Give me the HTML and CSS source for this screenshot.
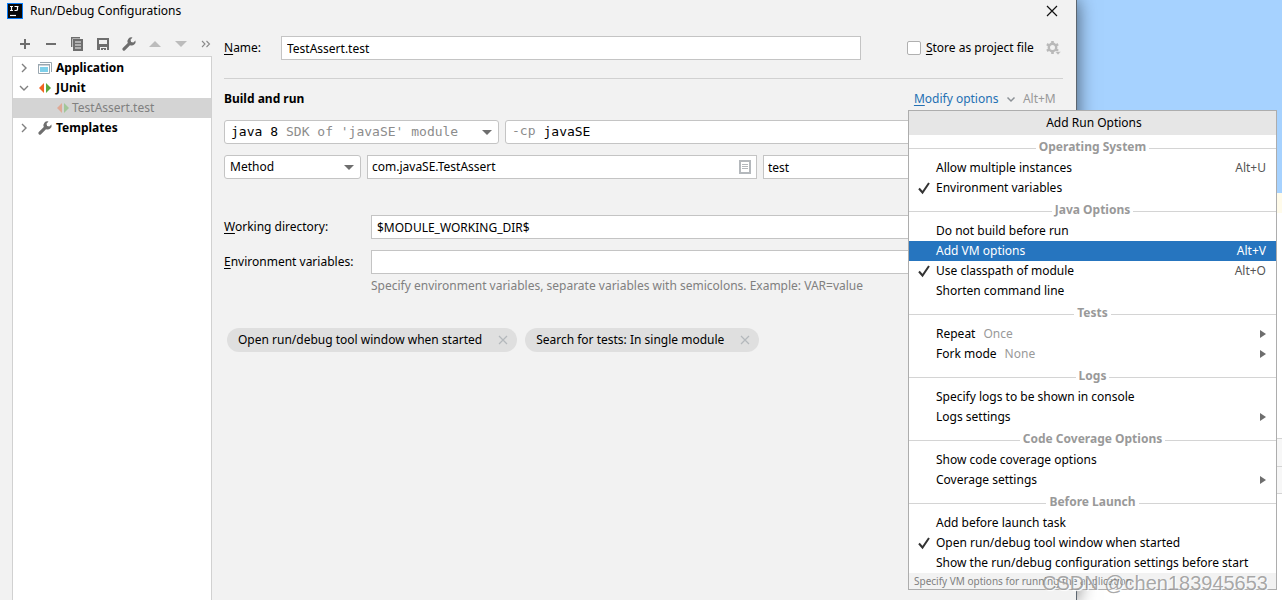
FILE: index.html
```html
<!DOCTYPE html>
<html lang="en">
<head>
<meta charset="utf-8">
<title>Run/Debug Configurations</title>
<link rel="stylesheet" href="styles.css">
</head>
<body>
<div class="desktop">
  <section class="dialog" aria-label="Run/Debug Configurations">
    <header class="titlebar">
      <svg class="logo" width="16" height="16" viewBox="0 0 16 16" aria-hidden="true"><rect width="16" height="16" fill="#087cfa"/><rect x="1" y="1" width="14" height="14" fill="#080808"/><path d="M3 3.500h3M4.500 3v5M3 7.500h3M7.500 3.500h4M10.500 3v3.500q0 1-1.500 1H7.500" stroke="#fff" stroke-width="1.200" fill="none"/><path d="M3 12.500h6" stroke="#fff" stroke-width="1.200"/></svg>
      <h1 class="title">Run/Debug Configurations</h1>
      <button class="icon-button close" aria-label="Close"><svg width="12" height="12" viewBox="0 0 12 12"><path d="M1 1l10 10M11 1L1 11" stroke="#111" stroke-width="1.200"/></svg></button>
    </header>
    <div class="body">
      <aside class="sidebar">
        <div class="toolbar">
          <button class="icon-button" aria-label="Add"><svg width="16" height="16" viewBox="0 0 16 16"><path d="M8 3v10M3 8h10" stroke="#6e6e6e" stroke-width="2"/></svg></button>
          <button class="icon-button" aria-label="Remove"><svg width="16" height="16" viewBox="0 0 16 16"><path d="M3 8h10" stroke="#6e6e6e" stroke-width="2"/></svg></button>
          <button class="icon-button" aria-label="Copy"><svg width="16" height="16" viewBox="0 0 16 16"><path d="M2.700 11V1.700H11" stroke="#6e6e6e" stroke-width="1.400" fill="none"/><path fill="#6e6e6e" fill-rule="evenodd" d="M4 3h10v12H4zM6 5.500v1h6v-1zM6 8.500v1h6v-1zM6 11.500v1h6v-1z"/></svg></button>
          <button class="icon-button" aria-label="Save"><svg width="16" height="16" viewBox="0 0 16 16"><path fill="#6e6e6e" fill-rule="evenodd" d="M2 2h12v12h-2v-3H5v3H2zM4 4v4h8V4z"/><path fill="#6e6e6e" d="M6 12h5v2H9v-1H8v1H6z"/></svg></button>
          <button class="icon-button" aria-label="Edit templates"><svg width="16" height="16" viewBox="0 0 16 16"><path fill="#6e6e6e" d="M14.500 4.500A4 4 0 0 1 9 9.200L4 14.200a1.500 1.500 0 0 1-2.200-2.200l5-5A4 4 0 0 1 11.500 1.500L9.500 3.700l.6 2.200 2.200.6z"/></svg></button>
          <button class="icon-button" aria-label="Move up" disabled><svg width="16" height="16" viewBox="0 0 16 16"><path d="M2 11h12L8 5z" fill="#bcbcbc"/></svg></button>
          <button class="icon-button" aria-label="Move down" disabled><svg width="16" height="16" viewBox="0 0 16 16"><path d="M2 5h12l-6 6z" fill="#bcbcbc"/></svg></button>
          <button class="icon-button" aria-label="More"><svg width="16" height="16" viewBox="0 0 16 16"><path d="M3 5l3 3-3 3M7.500 5l3 3-3 3" stroke="#8a8a8a" stroke-width="1.100" fill="none"/></svg></button>
        </div>
        <ul class="tree">
          <li class="node">
            <svg width="12" height="12" viewBox="0 0 12 12"><path d="M4 2l4 4-4 4" stroke="#808080" stroke-width="1.400" fill="none"/></svg>
            <svg width="16" height="16" viewBox="0 0 16 16"><path d="M3 2.500h11.500V12" stroke="#9aa7b0" fill="none"/><path d="M1.500 4.500h11v9h-11z" fill="#fff" stroke="#9aa7b0"/><path d="M1 4h12v1.500H1z" fill="#9aa7b0"/><path d="M3 7h8v5H3z" fill="#7ed0ea"/></svg>
            <span>Application</span>
          </li>
          <li class="node">
            <svg width="12" height="12" viewBox="0 0 12 12"><path d="M2 4l4 4 4-4" stroke="#808080" stroke-width="1.400" fill="none"/></svg>
            <svg width="16" height="16" viewBox="0 0 16 16"><path d="M7 3v10L2 8z" fill="#f26522"/><path d="M9 3v10l5-5z" fill="#59a83c"/></svg>
            <span>JUnit</span>
          </li>
          <li class="node child" aria-selected="true">
            <svg width="16" height="16" viewBox="0 0 16 16"><path d="M7 3v10L2 8z" fill="#e0a995"/><path d="M9 3v10l5-5z" fill="#a2c698"/></svg>
            <span>TestAssert.test</span>
          </li>
          <li class="node">
            <svg width="12" height="12" viewBox="0 0 12 12"><path d="M4 2l4 4-4 4" stroke="#808080" stroke-width="1.400" fill="none"/></svg>
            <svg width="16" height="16" viewBox="0 0 16 16"><path fill="#6e6e6e" d="M14.500 4.500A4 4 0 0 1 9 9.200L4 14.200a1.500 1.500 0 0 1-2.200-2.200l5-5A4 4 0 0 1 11.500 1.500L9.500 3.700l.6 2.200 2.200.6z"/></svg>
            <span>Templates</span>
          </li>
        </ul>
      </aside>
      <form class="main">
        <div class="name-row">
          <label class="name-label" for="name"><u>N</u>ame:</label>
          <input class="field name-field" id="name" type="text" value="TestAssert.test">
          <div class="store">
            <input class="check" id="store" type="checkbox">
            <label for="store"><u>S</u>tore as project file</label>
            <svg width="16" height="16" viewBox="0 0 16 16" aria-hidden="true"><circle cx="7.500" cy="7.500" r="3.700" fill="none" stroke="#b9b9b9" stroke-width="2.400"/><path d="M7.500 1v2.500M7.500 11.500V14M1.900 4.200l2.100 1.300M11 9.500l2.100 1.300M1.900 10.800L4 9.500M11 5.500l2.100-1.300" stroke="#b9b9b9" stroke-width="2.600"/><path d="M10 11.500h6L13 15z" fill="#b9b9b9" stroke="#f2f2f2" stroke-width=".6"/></svg>
          </div>
        </div>
        <div class="section-head">
          <h2 class="heading">Build and run</h2>
          <a class="modify" href="#options"><u>M</u>odify options</a>
          <svg width="10" height="10" viewBox="0 0 10 10" aria-hidden="true"><path d="M1.500 3.500L5 7l3.500-3.500" stroke="#8c9196" stroke-width="1.500" fill="none"/></svg>
          <span class="muted">Alt+M</span>
        </div>
        <div class="row">
          <div class="combo jre">
            <select class="select mono" aria-label="JRE"><option>java 8</option></select>
            <span class="combo-note mono">SDK of 'javaSE' module</span>
          </div>
          <label class="field prefixed mono"><span class="prefix">-cp</span><input class="bare mono" type="text" aria-label="Classpath module" value="javaSE"></label>
        </div>
        <div class="row second">
          <div class="combo kind"><select class="select" aria-label="Test kind"><option>Method</option></select></div>
          <div class="field class-field">
            <input class="bare" type="text" aria-label="Class" value="com.javaSE.TestAssert">
            <svg width="12" height="14" viewBox="0 0 12 14" aria-hidden="true"><rect x="1" y="1" width="10" height="12" fill="#fff" stroke="#b4b8bc" stroke-width="2"/><path d="M3 4.500h6M3 6.500h6M3 8.500h6" stroke="#b4b8bc"/></svg>
          </div>
          <input class="field method-field" type="text" aria-label="Method" value="test">
        </div>
        <div class="grid">
          <label for="dir"><u>W</u>orking directory:</label>
          <input class="field" id="dir" type="text" value="$MODULE_WORKING_DIR$">
          <label for="env"><u>E</u>nvironment variables:</label>
          <input class="field" id="env" type="text" value="">
        </div>
        <p class="hint">Specify environment variables, separate variables with semicolons. Example: VAR=value</p>
        <div class="chips">
          <span class="chip">Open run/debug tool window when started<button class="icon-button" type="button" aria-label="Remove"><svg width="10" height="10" viewBox="0 0 10 10"><path d="M1 1l8 8M9 1L1 9" stroke="#b4b8bc" stroke-width="1.200"/></svg></button></span>
          <span class="chip">Search for tests: In single module<button class="icon-button" type="button" aria-label="Remove"><svg width="10" height="10" viewBox="0 0 10 10"><path d="M1 1l8 8M9 1L1 9" stroke="#b4b8bc" stroke-width="1.200"/></svg></button></span>
        </div>
      </form>
    </div>
  </section>
  <div class="backdrop" aria-hidden="true">
    <div class="blue"></div><div class="cream"></div><div class="blank"></div><div class="band"></div><div class="band"></div>
  </div>
  <nav class="menu" id="options" aria-label="Add Run Options">
    <h2 class="menu-title">Add Run Options</h2>
    <h3 class="group"><span>Operating System</span></h3>
    <button class="item"><span>Allow multiple instances</span><kbd>Alt+U</kbd></button>
    <button class="item"><svg class="tick" width="14" height="14" viewBox="0 0 14 14"><path d="M2 7.500l3.500 4L12 2" stroke="#333" stroke-width="2" fill="none"/></svg><span>Environment variables</span></button>
    <h3 class="group"><span>Java Options</span></h3>
    <button class="item"><span>Do not build before run</span></button>
    <button class="item active"><span>Add VM options</span><kbd>Alt+V</kbd></button>
    <button class="item"><svg class="tick" width="14" height="14" viewBox="0 0 14 14"><path d="M2 7.500l3.500 4L12 2" stroke="#333" stroke-width="2" fill="none"/></svg><span>Use classpath of module</span><kbd>Alt+O</kbd></button>
    <button class="item"><span>Shorten command line</span></button>
    <h3 class="group"><span>Tests</span></h3>
    <button class="item"><span>Repeat</span><span class="muted">Once</span><svg class="arrow" width="6" height="8" viewBox="0 0 6 8"><path d="M0 0l6 4-6 4z" fill="#6e6e6e"/></svg></button>
    <button class="item"><span>Fork mode</span><span class="muted">None</span><svg class="arrow" width="6" height="8" viewBox="0 0 6 8"><path d="M0 0l6 4-6 4z" fill="#6e6e6e"/></svg></button>
    <h3 class="group"><span>Logs</span></h3>
    <button class="item"><span>Specify logs to be shown in console</span></button>
    <button class="item"><span>Logs settings</span><svg class="arrow" width="6" height="8" viewBox="0 0 6 8"><path d="M0 0l6 4-6 4z" fill="#6e6e6e"/></svg></button>
    <h3 class="group"><span>Code Coverage Options</span></h3>
    <button class="item"><span>Show code coverage options</span></button>
    <button class="item"><span>Coverage settings</span><svg class="arrow" width="6" height="8" viewBox="0 0 6 8"><path d="M0 0l6 4-6 4z" fill="#6e6e6e"/></svg></button>
    <h3 class="group"><span>Before Launch</span></h3>
    <button class="item"><span>Add before launch task</span></button>
    <button class="item"><svg class="tick" width="14" height="14" viewBox="0 0 14 14"><path d="M2 7.500l3.500 4L12 2" stroke="#333" stroke-width="2" fill="none"/></svg><span>Open run/debug tool window when started</span></button>
    <button class="item"><span>Show the run/debug configuration settings before start</span></button>
    <p class="menu-foot">Specify VM options for running the application</p>
  </nav>
  <div class="watermark">CSDN @chen183945653</div>
</div>
</body>
</html>
```
FILE: styles.css
```css
* { box-sizing: border-box; }
body { margin: 0; }
body, button, input, select {
  font-family: "Noto Sans", "Open Sans", sans-serif;
  font-size: 12px;
  line-height: 20px;
  color: #000;
}
h1, h2, h3, p, ul { margin: 0; padding: 0; font-size: 12px; font-weight: 400; }
u { text-underline-offset: 2px; }
.mono { font-family: "DejaVu Sans Mono", monospace; font-size: 13px; }
.muted { color: #999; }

.desktop { position: relative; display: flex; min-height: 100vh; overflow: hidden; background: #fff; }
.dialog {
  position: relative;
  z-index: 1;
  flex: 1;
  display: flex;
  flex-direction: column;
  background: #f2f2f2;
  border-right: 1px solid #5c6670;
  box-shadow: 0 0 18px rgba(0, 0, 0, 0.6);
}
.backdrop { flex: 0 0 16%; display: flex; flex-direction: column; }
.blue { height: 193px; background: #a6d2ff; }
.cream { height: 20px; background: #fffbea; }
.blank { height: 225px; }
.band { height: 28px; background: #f7f7f7; border-top: 1px solid #d4d4d4; }
.band:last-child { border-bottom: 1px solid #d4d4d4; }

.titlebar { display: flex; align-items: center; gap: 7px; height: 22px; padding: 0 18px 0 7px; }
.title { flex: 1; }
.icon-button { display: flex; padding: 0; border: 0; background: none; }

.body { flex: 1; display: flex; gap: 12px; padding: 0 13px 0 12px; }
.sidebar { flex: 0 0 200px; min-width: 0; display: flex; flex-direction: column; }
.toolbar { display: flex; gap: 10px; height: 34px; padding: 14px 0 0 5px; }
.tree { flex: 1; padding-top: 1px; background: #fff; border: 1px solid #d1d1d1; border-bottom: 0; list-style: none; }
.node { display: flex; align-items: center; gap: 7px; height: 20px; padding-left: 5px; font-weight: 700; }
.node span { margin-left: -4px; }
.node.child { gap: 5px; padding-left: 42px; background: #d4d4d4; color: #808080; font-weight: 400; }

.main { flex: 1; min-width: 0; padding-top: 14px; }
.field { min-width: 0; height: 24px; padding: 0 5px; border: 1px solid #c4c4c4; background: #fff; }
.bare { flex: 1; min-width: 0; padding: 0; border: 0; background: none; outline: 0; }
.name-row { display: flex; align-items: center; padding-bottom: 18px; border-bottom: 1px solid #d1d1d1; }
.name-label { flex: 0 0 57px; }
.name-field { flex: 1; }
.store { flex: 0 0 156px; display: flex; align-items: center; gap: 5px; margin-left: 46px; padding-right: 2px; }
.store label { flex: 1; }
.check { appearance: none; width: 14px; height: 14px; margin: 0; border: 1px solid #b0b0b0; border-radius: 2px; background: #fff; }
.section-head { display: flex; align-items: center; gap: 4px; height: 41px; padding: 0 4px 2px 0; }
.heading { flex: 1; font-weight: 700; }
.modify { flex: 0 0 88px; color: #2470b3; text-decoration: none; }
.section-head .muted { flex: 0 0 39px; padding-left: 3px; }

.row { display: flex; gap: 6px; }
.row.second { padding-top: 11px; }
.combo { position: relative; }
.combo::after {
  content: "";
  position: absolute;
  right: 7px;
  top: 10px;
  border: 5px solid transparent;
  border-top-color: #6e6e6e;
  border-bottom: 0;
  pointer-events: none;
}
.jre { flex: 0 0 275px; }
.kind { flex: 0 0 137px; }
.select { appearance: none; display: block; width: 100%; height: 24px; padding: 0 5px; border: 1px solid #c4c4c4; border-radius: 3px; background: #fff; }
.jre .select { padding-left: 6px; }
.combo-note { position: absolute; left: 62px; top: 2px; color: #8c8c8c; pointer-events: none; }
.prefixed { flex: 1; display: flex; gap: 8px; padding-left: 6px; border-radius: 3px; }
.prefix { color: #8c8c8c; }
.class-field { flex: 0 0 390px; display: flex; align-items: center; }
.method-field { flex: 1; padding-left: 4px; }
.class-field { padding-left: 4px; }
.grid { display: grid; grid-template-columns: 147px 1fr; row-gap: 11px; align-items: center; padding-top: 36px; }
.hint { padding: 2px 0 0 147px; color: #808080; }
.chips { display: flex; gap: 8px; padding: 32px 0 0 3px; }
.chip { display: flex; align-items: center; gap: 16px; height: 24px; padding: 0 9px 0 11px; border-radius: 12px; background: #dfdfdf; }

.menu {
  position: absolute;
  z-index: 2;
  top: 110px;
  right: 5px;
  width: 369px;
  background: #fff;
  border: 1px solid #adadad;
}
.menu-title { height: 24px; line-height: 24px; padding-left: 3px; background: #e6e6e6; text-align: center; }
.group { display: flex; align-items: center; gap: 3px; height: 23px; color: #999; font-weight: 700; }
.group::before, .group::after { content: ""; flex: 1; height: 1px; margin-top: 4px; background: #d4d4d4; }
.item { position: relative; display: flex; align-items: center; gap: 8px; width: 100%; height: 20px; padding: 0 10px 0 27px; border: 0; background: none; text-align: left; white-space: nowrap; }
.item kbd { margin-left: auto; font-family: inherit; font-size: 12px; color: #555; }
.item.active, .item.active kbd { background: #2675bf; color: #fff; }
.tick { position: absolute; left: 8px; top: 3px; }
.arrow { margin-left: auto; }
.menu-foot { height: 16px; padding-left: 5px; background: #f2f2f2; color: #808080; font-size: 10px; line-height: 16px; }
.watermark {
  position: absolute;
  z-index: 3;
  right: 14px;
  bottom: 5px;
  font: 20px/24px "Liberation Sans", sans-serif;
  color: rgba(120, 120, 120, 0.65);
  text-shadow: 1px 1px 1px #fff;
}
```
